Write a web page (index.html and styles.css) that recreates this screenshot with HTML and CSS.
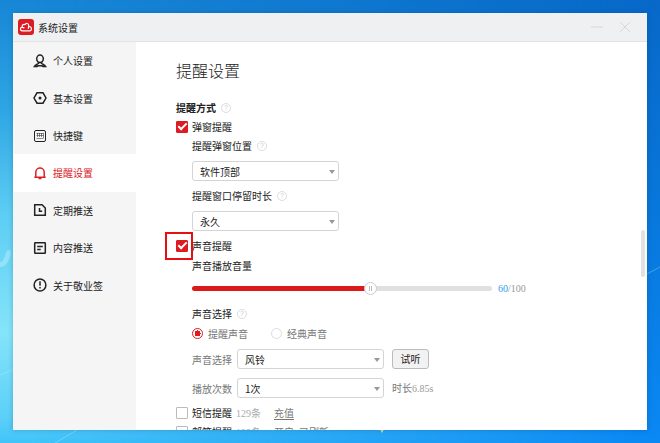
FILE: index.html
```html
<!DOCTYPE html>
<html lang="zh-CN">
<head>
<meta charset="utf-8">
<title>系统设置</title>
<link rel="stylesheet" href="styles.css">
</head>
<body>
<svg class="wisps" viewBox="0 0 660 443" preserveAspectRatio="none" aria-hidden="true">
  <path d="M0 262C6 262 4 250 9 250S8 268 0 267" fill="#c9f4fc" opacity=".4"/>
  <path d="M0 375l13-5M55 443l22-13M647 274l13-7" stroke="#d4f6ff" opacity=".3" fill="none"/>
  <path d="M380 429h4l-2 4z" fill="#dcea90"/>
</svg>
<div class="window">
  <header class="titlebar">
    <svg class="logo" viewBox="0 0 16 16" aria-hidden="true"><rect width="16" height="16" rx="3" fill="#dc1c20"/><path d="M11.500 11.800H4.300C2 11.800 1.700 8.600 4.200 8.200 3.800 6 5.500 4.800 7 5.600 8.200 3.600 10.800 4.200 10.700 6.800L10.300 9.500M11 7.600C14 7.300 14.300 11.600 11.500 11.800M4.200 8.200L6 8.900" fill="none" stroke="#fff" stroke-width="1.200" stroke-linejoin="round" stroke-linecap="round"/></svg>
    <span class="caption">系统设置</span>
    <button class="winbtn" type="button" aria-label="最小化"><svg viewBox="0 0 12 12"><path d="M0 6h12"/></svg></button>
    <button class="winbtn" type="button" aria-label="关闭"><svg viewBox="0 0 12 12"><path d="M1 1l10 10M11 1L1 11"/></svg></button>
  </header>
  <div class="main">
    <nav class="nav">
      <a href="#"><svg viewBox="0 0 14 14"><ellipse cx="7" cy="4.800" rx="3.300" ry="3.700"/><path d="M5.500 8v1.500C4 10.500 2.500 10.600 1.300 12.600h2.700L5 11.800h4l1 .8h2.700C11.500 10.600 10 10.500 8.500 9.500V8"/></svg>个人设置</a>
      <a href="#"><svg viewBox="0 0 14 14"><path d="M4 1.800h6l3 5.200-3 5.200H4L1 7z"/><circle cx="7" cy="7" r="1.500" class="solid"/></svg>基本设置</a>
      <a href="#"><svg viewBox="0 0 14 14"><rect x="1.500" y="1.500" width="11" height="11" rx="1.500" class="thin"/><path d="M3.500 4.500h7M3.500 6.500h7M3.500 9.500h7M4.500 4v4M6.500 4v4M8.500 4v4M10.500 4v5" class="faint"/></svg>快捷键</a>
      <a href="#" class="active" aria-current="page"><svg viewBox="0 0 14 14"><path d="M2.800 11.300V6.300a4.200 4.200 0 0 1 8.400 0V11.300M1.300 11.300h11.400M5.500 12.600h3"/></svg>提醒设置</a>
      <a href="#"><svg viewBox="0 0 14 14"><path d="M1.700 1.700h7.300l3.300 3.300v7.300H1.700z"/><path d="M6.500 5v3.200h2.700"/></svg>定期推送</a>
      <a href="#"><svg viewBox="0 0 14 14"><rect x="1.700" y="1.700" width="10.600" height="10.600" rx=".5"/><path d="M4.200 5.500h5.600M4.200 8.500h3.500"/></svg>内容推送</a>
      <a href="#"><svg viewBox="0 0 14 14"><circle cx="7" cy="7" r="5.900"/><path d="M7 3.300v4.500M7 9v1.600"/></svg>关于敬业签</a>
    </nav>
    <main class="content">
      <h1>提醒设置</h1>
      <h2 class="row">提醒方式<span class="help">?</span></h2>
      <label class="row"><input type="checkbox" checked>弹窗提醒</label>
      <div class="group">
        <label class="row" for="pos">提醒弹窗位置<span class="help">?</span></label>
        <div class="field"><span class="select"><select id="pos"><option>软件顶部</option></select></span></div>
        <label class="row" for="stay">提醒窗口停留时长<span class="help">?</span></label>
        <div class="field"><span class="select"><select id="stay"><option>永久</option></select></span></div>
      </div>
      <label class="row marked"><input type="checkbox" checked>声音提醒</label>
      <div class="group">
        <label class="row" for="vol">声音播放音量</label>
        <div class="row volume"><input id="vol" type="range" min="0" max="100" value="60"><span class="num"><b>60</b>/100</span></div>
        <div class="row">声音选择<span class="help">?</span></div>
        <div class="row radios">
          <label><input type="radio" name="kind" checked>提醒声音</label>
          <label><input type="radio" name="kind">经典声音</label>
        </div>
        <div class="field"><label for="snd">声音选择</label><span class="select"><select id="snd"><option>风铃</option></select></span><button class="btn" type="button">试听</button></div>
        <div class="field"><label for="cnt">播放次数</label><span class="select"><select id="cnt"><option>1次</option></select></span><span>时长<span class="num">6.85s</span></span></div>
      </div>
      <div class="row notice"><label><input type="checkbox">短信提醒</label><span class="quota"><span class="num">129</span>条</span><a href="#">充值</a></div>
      <div class="row notice"><label><input type="checkbox">邮箱提醒</label><span class="quota"><span class="num">129</span>条</span><a href="#">开启</a><a href="#">已刷新</a></div>
      <div class="thumb"></div>
    </main>
  </div>
</div>
</body>
</html>
```
FILE: styles.css
```css
*, *::before, *::after { box-sizing: border-box; }
body {
  margin: 0;
  height: 100vh;
  padding: 13px;
  font: 10px/19px "Noto Sans CJK SC", sans-serif;
  color: #222;
  background: linear-gradient(180deg, #1786d6 0%, #2fa6e4 25%, #5ccdf4 48%, #84e4fa 75%, #5cd0f8 94%, #40c4fa 100%);
}
body::before {
  content: "";
  position: absolute;
  inset: 0;
  background: linear-gradient(180deg, #0768c8 0%, #0878dc 50%, #0a88f4 100%);
  mask-image: linear-gradient(90deg, transparent 5%, #000 98%);
}
.wisps { position: absolute; inset: 0; width: 100%; height: 100%; }
.window {
  position: relative;
  height: calc(100vh - 26px);
  display: flex;
  flex-direction: column;
  background: #fff;
  overflow: hidden;
  box-shadow: 0 0 5px #0354;
}
.titlebar {
  flex: none;
  height: 29px;
  display: flex;
  align-items: center;
  padding: 0 8px 0 5px;
  background: #eff0f2;
  border-bottom: 1px solid #e4e4e5;
}
.logo { width: 16px; height: 16px; }
.caption { margin: 0 auto 0 4px; }
.winbtn { width: 28px; height: 20px; padding: 0; border: 0; background: none; }
.winbtn svg { width: 12px; height: 12px; stroke: #d8d8da; fill: none; display: block; margin: auto; }
.main { flex: 1; min-height: 0; display: flex; }
.nav {
  width: 123px;
  background: #f5f5f5;
  display: grid;
  grid-template-rows: repeat(7, 1fr) 126px;
}
.nav a {
  display: flex;
  align-items: center;
  gap: 6px;
  padding-left: 20px;
  color: #222;
  text-decoration: none;
}
.nav svg { width: 14px; height: 14px; fill: none; stroke: currentColor; stroke-width: 1.5; }
.nav .thin { stroke-width: 1; }
.nav .faint { stroke-width: 1; opacity: .5; }
.nav .solid { fill: currentColor; stroke: none; }
.nav .active { background: #fff; color: #dc2025; }
.content { flex: 1; position: relative; padding: 16px 0 0 40px; overflow: hidden; }
h1 { margin: 0 0 16px; font-size: 16px; line-height: 24px; font-weight: 300; }
h2 { margin: 0; font-size: 10px; font-weight: 700; }
.row { height: 19px; display: flex; align-items: center; width: max-content; }
.group { padding-left: 16px; }
.help {
  width: 10px; height: 10px;
  margin-left: 5px;
  border: 1px solid #ddd;
  border-radius: 50%;
  color: #ccc;
  font: 7px/8px "Liberation Sans", sans-serif;
  text-align: center;
}
.field { display: flex; align-items: center; height: 20px; margin: 6px 0 5px; color: #777; }
.field label { margin-right: 5px; }
.select { position: relative; margin-right: 8px; }
.select::after {
  content: "";
  position: absolute;
  right: 4px; top: 9px;
  border: 3px solid transparent;
  border-top: 4px solid #999;
  border-bottom: 0;
}
select {
  display: block;
  appearance: none;
  width: 147px; height: 20px;
  padding: 0 7px;
  border: 1px solid #d4d4d4;
  border-radius: 3px;
  background: #fff;
  color: #222;
  font: inherit;
}
.field + .field { margin-top: 9px; }
.btn {
  width: 37px; height: 20px;
  padding: 0;
  border: 1px solid #bbb;
  border-radius: 3px;
  background: #f2f2f2;
  color: #222;
  font: inherit;
  line-height: 18px;
}
input[type="checkbox"] {
  appearance: none;
  width: 12px; height: 12px;
  margin: 0 4px 0 0;
  border: 1px solid #bbb;
  border-radius: 1px;
  background: #fff;
  display: grid;
  place-items: center;
}
input[type="checkbox"]:checked { background: #dc1c20; border-color: #dc1c20; }
input[type="checkbox"]:checked::after {
  content: "";
  width: 9px; height: 5px;
  border: solid #fff;
  border-width: 0 0 2px 2px;
  transform: translateY(-1px) rotate(-45deg);
}
.marked { position: relative; margin-bottom: 1px; }
.marked::before {
  content: "";
  position: absolute;
  left: -11px; top: -4px;
  width: 28px; height: 28px;
  border: 2px solid #e60f14;
}
.volume { margin: 4px 0 6px; gap: 6px; }
input[type="range"] { appearance: none; width: 300px; height: 13px; margin: 0; background: none; }
input[type="range"]::-webkit-slider-runnable-track {
  height: 5px;
  border-radius: 3px;
  background: linear-gradient(90deg, #dc1a1a 60%, #e0e0e0 60%);
}
input[type="range"]::-webkit-slider-thumb {
  appearance: none;
  box-sizing: border-box;
  width: 13px; height: 13px;
  margin-top: -4px;
  border: 1px solid #ccc;
  border-radius: 50%;
  background:
    linear-gradient(#bbb, #bbb) 4px 3px / 1px 5px no-repeat,
    linear-gradient(#bbb, #bbb) 6px 3px / 1px 5px no-repeat,
    #fff;
}
.num { font-family: "Liberation Serif", serif; font-size: 10px; color: #999; }
.num b { color: #1da1f2; font-weight: 400; }
.radios { gap: 23px; margin-top: 1px; color: #777; }
.radios label, .notice label { display: flex; align-items: center; }
input[type="radio"] {
  appearance: none;
  width: 11px; height: 11px;
  margin: 0 5px 0 0;
  border: 1px solid #ddd;
  border-radius: 50%;
}
input[type="radio"]:checked { border-color: #dc1c20; background: radial-gradient(#dc1c20 0 3px, #fff 3px); }
.notice label { margin-right: 4px; }
.quota { color: #aaa; }
.quota .num { color: inherit; }
.notice a { margin-left: 13px; color: #777; text-underline-offset: 2px; }
.notice a + a { margin-left: 5px; }
.thumb { position: absolute; right: 2px; top: 188px; width: 4px; height: 47px; border-radius: 2px; background: #e2e2e2; }
```
